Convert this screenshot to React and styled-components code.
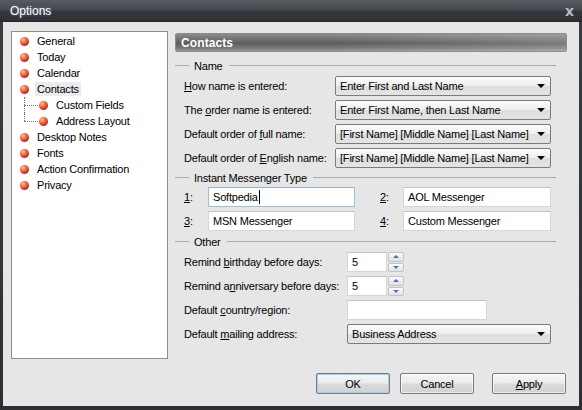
import React from 'react';
import styled, { createGlobalStyle } from 'styled-components';

const GlobalStyle = createGlobalStyle`
  html, body {
    margin: 0;
    padding: 0;
    background: #2f3136;
  }
  * {
    box-sizing: border-box;
  }
`;

const Window = styled.div`
  width: 582px;
  height: 410px;
  display: flex;
  flex-direction: column;
  background: linear-gradient(#3a3d42, #2d2f33);
  font-family: "Liberation Sans", Arial, sans-serif;
  font-size: 11px;
  letter-spacing: -0.2px;
  color: #000;
  overflow: hidden;
`;

const TitleBar = styled.div`
  height: 22px;
  flex: none;
  display: flex;
  align-items: center;
  justify-content: space-between;
  padding: 0 8px 0 10px;
  background: linear-gradient(#575a60 0%, #45484d 45%, #35373c 55%, #2e3034 100%);
  border-bottom: 1px solid #25272a;
`;

const Title = styled.span`
  color: #fff;
  font-size: 12px;
  letter-spacing: 0;
  text-shadow: 0 0 3px rgba(160, 190, 255, 0.5);
`;

const Close = styled.span`
  color: #b9bcc2;
  font-size: 14px;
  font-weight: bold;
  font-family: "DejaVu Sans", sans-serif;
  letter-spacing: 0;
`;

const Frame = styled.div`
  flex: 1;
  margin: 0 3px 4px 3px;
  background: #e6e6e6;
  display: flex;
  flex-direction: column;
  padding: 9px 12px 0 8px;
`;

const Main = styled.div`
  display: flex;
  align-items: flex-start;
  gap: 7px;
`;

const Tree = styled.div`
  width: 157px;
  height: 328px;
  flex: none;
  background: #fff;
  border: 1px solid #8e8e8e;
  padding-top: 1px;
`;

const TreeRow = styled.div`
  height: 16px;
  display: flex;
  align-items: center;
  padding-left: ${p => (p.$child ? 12 : 8)}px;
`;

const Twig = styled.span`
  position: relative;
  width: 15px;
  height: 16px;
  flex: none;
  &::before {
    content: '';
    position: absolute;
    left: 0;
    top: 0;
    height: ${p => (p.$last ? 8 : 16)}px;
    border-left: 1px dotted #7a7a7a;
  }
  &::after {
    content: '';
    position: absolute;
    left: 0;
    top: 8px;
    width: 14px;
    border-top: 1px dotted #7a7a7a;
  }
`;

const Bullet = styled.span`
  width: 9px;
  height: 9px;
  flex: none;
  border-radius: 50%;
  background: radial-gradient(circle at 35% 30%, #ffc2a6 0%, #f06a40 35%, #c2330f 70%, #8a1e05 100%);
  margin-right: 8px;
`;

const TreeLabel = styled.span`
  padding: 1px 2px;
  margin-left: -2px;
  background: ${p => (p.$selected ? '#ebebeb' : 'transparent')};
`;

const Panel = styled.div`
  width: 392px;
  display: flex;
  flex-direction: column;
`;

const Header = styled.div`
  margin-top: 2px;
  height: 19px;
  display: flex;
  align-items: center;
  padding-left: 5px;
  border: 1px solid #8c8c8c;
  border-radius: 2px;
  background:
    linear-gradient(90deg, rgba(0,0,0,0) 40%, rgba(255,255,255,0.18) 100%),
    linear-gradient(#8a8a8a 0%, #6a6a6a 40%, #5c5c5c 55%, #7c7c7c 85%, #9c9c9c 100%);
  color: #fff;
  font-weight: bold;
  font-size: 12px;
  letter-spacing: 0.1px;
`;

const GroupHead = styled.div`
  margin-top: ${p => p.$top}px;
  height: 13px;
  width: 381px;
  display: flex;
  align-items: center;
  gap: 5px;
  &::before {
    content: '';
    width: 14px;
    height: 1px;
    background: #a9a9a9;
  }
  &::after {
    content: '';
    flex: 1;
    height: 1px;
    background: #a9a9a9;
    margin-left: 1px;
  }
`;

const Rows = styled.div`
  margin-top: ${p => p.$top}px;
  display: flex;
  flex-direction: column;
  gap: 4px;
  padding-left: 9px;
`;

const Row = styled.div`
  height: 20px;
  display: flex;
  align-items: center;
`;

const Label = styled.span`
  width: ${p => p.$w}px;
  flex: none;
`;

const Combo = styled.div`
  width: ${p => p.$w}px;
  height: 20px;
  display: flex;
  align-items: center;
  justify-content: space-between;
  padding: 0 5px 0 4px;
  border: 1px solid #7b7b7b;
  border-radius: 2px;
  background: linear-gradient(#fbfbfb 0%, #eeeeee 50%, #dedede 52%, #e4e4e4 100%);
  &::after {
    content: '';
    border-left: 4px solid transparent;
    border-right: 4px solid transparent;
    border-top: 4px solid #000;
  }
`;

const Field = styled.div`
  width: ${p => p.$w}px;
  height: 20px;
  display: flex;
  align-items: center;
  padding-left: 4px;
  background: #fff;
  border: 1px solid ${p => (p.$focus ? '#9ebfd8' : '#d6d6d6')};
  border-top-color: ${p => (p.$focus ? '#8fb1cc' : '#c4c4c4')};
`;

const Caret = styled.span`
  width: 1px;
  height: 14px;
  background: #000;
  margin-left: 1px;
`;

const Cell = styled.div`
  display: flex;
  align-items: center;
  margin-left: ${p => p.$gap || 0}px;
`;

const Key = styled.u`
  text-decoration-thickness: 1px;
  text-underline-offset: 1px;
`;

const Spin = styled.div`
  display: flex;
  align-items: center;
`;

const SpinButtons = styled.div`
  width: 16px;
  height: 20px;
  display: flex;
  flex-direction: column;
  gap: 1px;
  margin-left: 1px;
`;

const SpinBtn = styled.div`
  flex: 1;
  display: flex;
  align-items: center;
  justify-content: center;
  border: 1px solid #c3c3c3;
  border-radius: 2px;
  background: linear-gradient(#fafafa, #e2e2e2);
  &::after {
    content: '';
    border-left: 3px solid transparent;
    border-right: 3px solid transparent;
    ${p => (p.$down ? 'border-top' : 'border-bottom')}: 3px solid #4a6fc0;
  }
`;

const Buttons = styled.div`
  margin-top: 14px;
  display: flex;
  justify-content: flex-end;
  padding-right: 1px;
`;

const Button = styled.div`
  width: 74px;
  height: 21px;
  margin-left: ${p => p.$gap}px;
  display: flex;
  align-items: center;
  justify-content: center;
  border: 1px solid #7a7a7a;
  border-radius: 2px;
  background: linear-gradient(#f6f6f6 0%, #ebebeb 48%, #dadada 52%, #d2d2d2 100%);
  box-shadow: inset 0 0 0 1px ${p => (p.$default ? '#9fd0f2' : 'rgba(255,255,255,0.6)')};
`;

const treeItems = [
  { label: 'General' },
  { label: 'Today' },
  { label: 'Calendar' },
  { label: 'Contacts', selected: true },
  { label: 'Custom Fields', child: true },
  { label: 'Address Layout', child: true, last: true },
  { label: 'Desktop Notes' },
  { label: 'Fonts' },
  { label: 'Action Confirmation' },
  { label: 'Privacy' },
];

const nameRows = [
  { label: <><Key>H</Key>ow name is entered:</>, value: 'Enter First and Last Name' },
  { label: <>The <Key>o</Key>rder name is entered:</>, value: 'Enter First Name, then Last Name' },
  { label: <>Default order of <Key>f</Key>ull name:</>, value: '[First Name] [Middle Name] [Last Name]' },
  { label: <>Default order of <Key>E</Key>nglish name:</>, value: '[First Name] [Middle Name] [Last Name]' },
];

const SpinField = ({ value }) => (
  <Spin>
    <Field $w={40}>{value}</Field>
    <SpinButtons>
      <SpinBtn />
      <SpinBtn $down />
    </SpinButtons>
  </Spin>
);

export default function App() {
  return (
    <Window>
      <GlobalStyle />
      <TitleBar>
        <Title>Options</Title>
        <Close>x</Close>
      </TitleBar>
      <Frame>
        <Main>
          <Tree>
            {treeItems.map(item => (
              <TreeRow key={item.label} $child={item.child}>
                {item.child && <Twig $last={item.last} />}
                <Bullet />
                <TreeLabel $selected={item.selected}>{item.label}</TreeLabel>
              </TreeRow>
            ))}
          </Tree>
          <Panel>
            <Header>Contacts</Header>

            <GroupHead $top={7}>Name</GroupHead>
            <Rows $top={4}>
              {nameRows.map((r, i) => (
                <Row key={i}>
                  <Label $w={151}>{r.label}</Label>
                  <Combo $w={216}>{r.value}</Combo>
                </Row>
              ))}
            </Rows>

            <GroupHead $top={3}>Instant Messenger Type</GroupHead>
            <Rows $top={3}>
              <Row>
                <Cell>
                  <Label $w={24}><Key>1</Key>:</Label>
                  <Field $w={147} $focus>Softpedia<Caret /></Field>
                </Cell>
                <Cell $gap={25}>
                  <Label $w={23}><Key>2</Key>:</Label>
                  <Field $w={148}>AOL Messenger</Field>
                </Cell>
              </Row>
              <Row>
                <Cell>
                  <Label $w={24}><Key>3</Key>:</Label>
                  <Field $w={147}>MSN Messenger</Field>
                </Cell>
                <Cell $gap={25}>
                  <Label $w={23}><Key>4</Key>:</Label>
                  <Field $w={148}>Custom Messenger</Field>
                </Cell>
              </Row>
            </Rows>

            <GroupHead $top={4}>Other</GroupHead>
            <Rows $top={4}>
              <Row>
                <Label $w={163}>Remind <Key>b</Key>irthday before days:</Label>
                <SpinField value="5" />
              </Row>
              <Row>
                <Label $w={163}>Remind a<Key>n</Key>niversary before days:</Label>
                <SpinField value="5" />
              </Row>
              <Row>
                <Label $w={163}>Default <Key>c</Key>ountry/region:</Label>
                <Field $w={140} />
              </Row>
              <Row>
                <Label $w={163}>Default <Key>m</Key>ailing address:</Label>
                <Combo $w={204}>Business Address</Combo>
              </Row>
            </Rows>
          </Panel>
        </Main>
        <Buttons>
          <Button $default $gap={0}>OK</Button>
          <Button $gap={10}>Cancel</Button>
          <Button $gap={18}><Key>A</Key>pply</Button>
        </Buttons>
      </Frame>
    </Window>
  );
}
